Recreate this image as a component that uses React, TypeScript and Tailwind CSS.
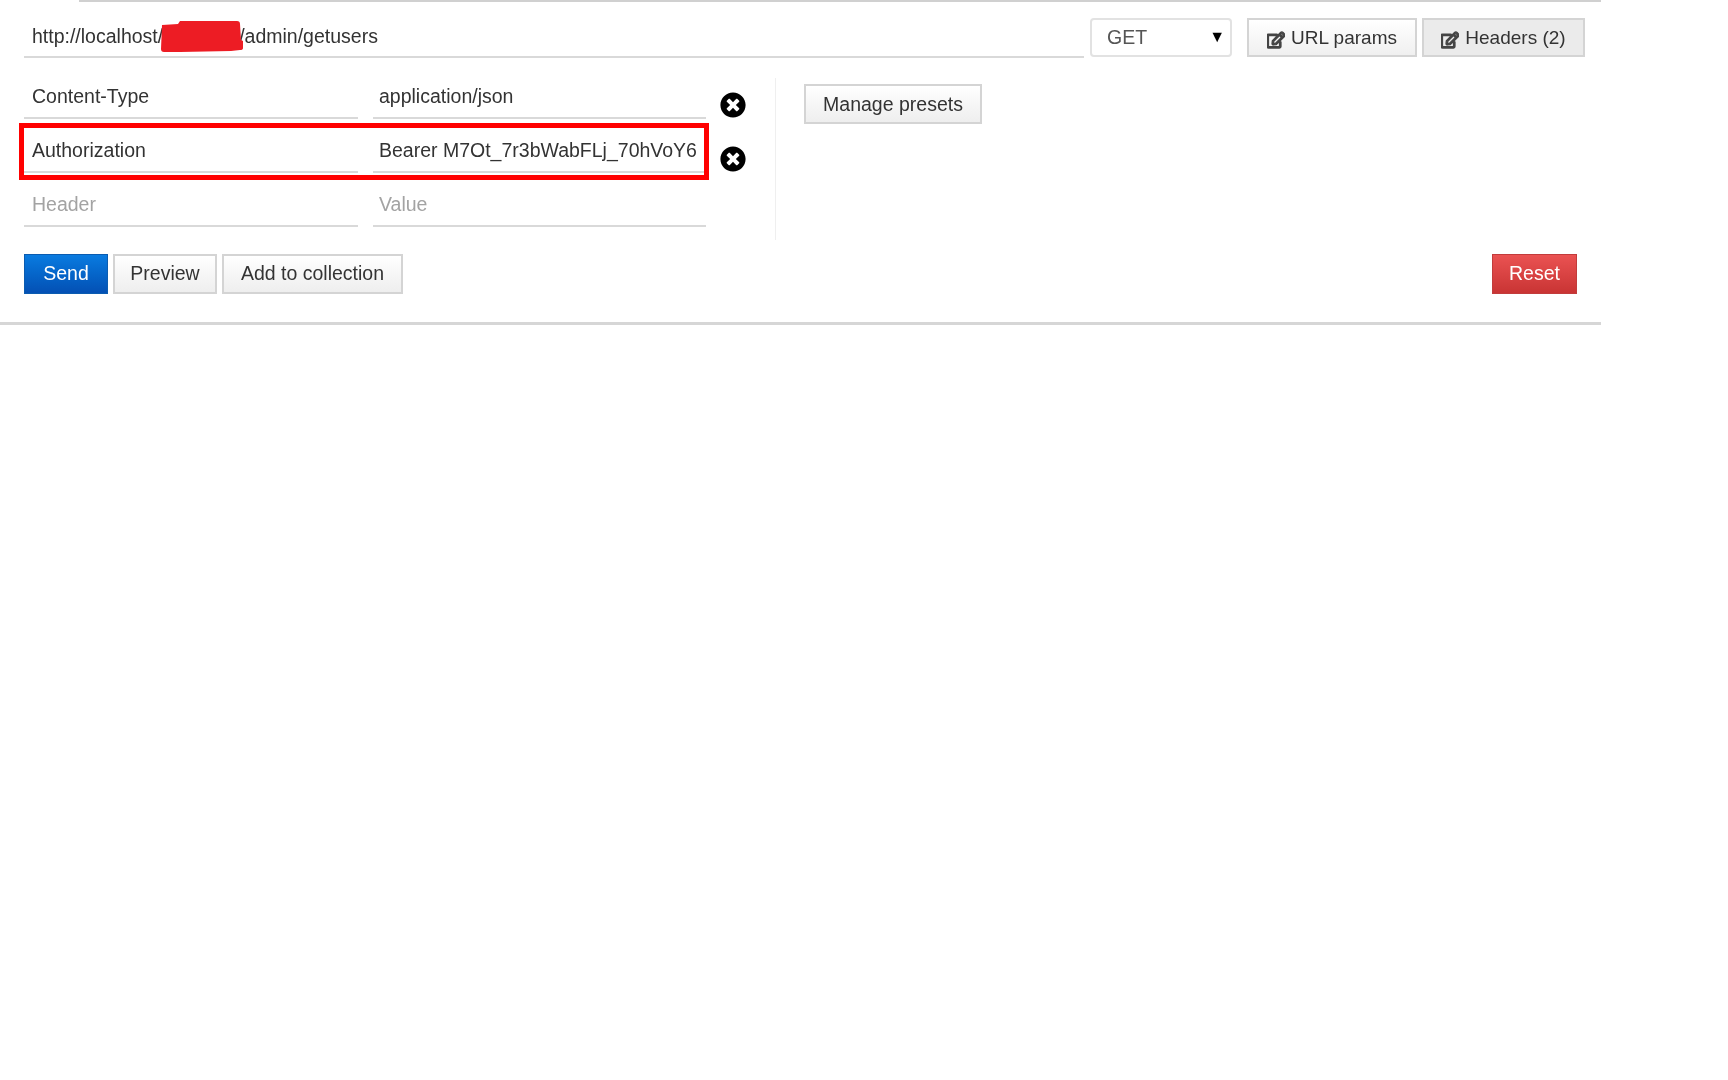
import React from 'react';
import { FaRegEdit, FaTimesCircle } from 'react-icons/fa';

function Field({ text, placeholder, className }: { text?: string; placeholder?: string; className: string }) {
  return (
    <div className={`h-[41px] border-b-2 border-[#d9d9d9] text-[19.5px] leading-[36px] whitespace-nowrap ${className} ${text ? 'text-[#333]' : 'text-[#a3a3a3]'}`}>
      {text || placeholder}
    </div>
  );
}

function HeaderRow({ name, value, marked }: { name?: string; value?: string; marked?: boolean }) {
  return (
    <div className="relative flex h-[54px] items-end">
      <Field text={name} placeholder="Header" className="w-[334px] pl-2" />
      <Field text={value} placeholder="Value" className="ml-[15px] w-[333px] pl-[6px]" />
      {name && <FaTimesCircle className="absolute left-[696px] top-[27px] text-[26px] text-black" />}
      {marked && <div className="absolute left-[-5px] top-[4px] h-[57px] w-[690px] border-[5px] border-[#f00]" />}
    </div>
  );
}

function TabButton({ label, active, className }: { label: string; active?: boolean; className: string }) {
  return (
    <button className={`flex h-[39px] items-center justify-center gap-[6px] border-2 border-[#d4d4d4] pt-[1px] text-[19px] text-[#333] ${active ? 'bg-[#ebebeb]' : 'bg-gradient-to-b from-white to-[#f0f0f0]'} ${className}`}>
      <FaRegEdit className="mt-[3px] stroke-[40] text-[18px] text-[#444]" />
      {label}
    </button>
  );
}

function PlainButton({ label, className }: { label: string; className: string }) {
  return (
    <button className={`h-[40px] border-2 border-[#d4d4d4] bg-gradient-to-b from-white to-[#eeeeee] text-[19.5px] text-[#333] ${className}`}>
      {label}
    </button>
  );
}

export default function App() {
  return (
    <div className="h-[1080px] bg-white font-['Liberation_Sans',Arial,sans-serif] blur-[0.4px]">
      <div className="w-[1601px] border-b-[3px] border-[#d6d6d6] pb-[28px]">
        <div className="ml-[79px] h-[2px] bg-[#d0d0d0]" />

        <div className="flex pl-6 pt-4">
          <div className="relative h-[40px] w-[1060px] border-b-2 border-[#d9d9d9] pl-2 text-[19.5px] leading-[36px] whitespace-nowrap text-[#333]">
            http://localhost/
            <span className="inline-block w-[76px]" />
            /admin/getusers
            {/* hand drawn redaction over the host name */}
            <svg className="absolute left-[137px] top-[3px]" width="82" height="31" viewBox="0 0 82 31">
              <path d="M1 4 L17 3 L19 0 L76 0 Q79 0 79 3 L80 19 L82 20 L82 27 Q82 29 79 29 L70 30 L19 31 L3 31 Q0 31 0 28 Z" fill="#ed1c24" />
            </svg>
          </div>
          <div className="ml-[6px] flex h-[39px] w-[142px] items-center justify-between rounded-[4px] border-2 border-[#e2e2e2] pl-[15px] pr-[5px] pt-[1px] text-[19.5px] text-[#555]">
            GET
            <span className="mb-[3px] text-[16px] text-black">▼</span>
          </div>
          <TabButton label="URL params" className="ml-[15px] w-[170px]" />
          <TabButton label="Headers (2)" active className="ml-[5px] w-[163px]" />
        </div>

        <div className="ml-6 mt-[7px] flex">
          <div className="w-[751px]">
            <HeaderRow name="Content-Type" value="application/json" />
            <HeaderRow name="Authorization" value="Bearer M7Ot_7r3bWabFLj_70hVoY6" marked />
            <HeaderRow />
          </div>
          <div className="mt-[13px] h-[162px] border-l border-[#efefef]" />
          <PlainButton label="Manage presets" className="ml-[28px] mt-[19px] h-[39px] w-[178px] pt-[1px]" />
        </div>

        <div className="mt-[14px] flex pl-6 pr-6">
          <button className="h-[40px] w-[84px] border border-[#0b5cb0] bg-gradient-to-b from-[#0a7be0] to-[#0450b4] text-[19.5px] text-white">
            Send
          </button>
          <PlainButton label="Preview" className="ml-[5px] w-[104px]" />
          <PlainButton label="Add to collection" className="ml-[5px] w-[181px]" />
          <button className="ml-auto h-[40px] w-[85px] border border-[#c23c3c] bg-gradient-to-b from-[#ea5252] to-[#c93434] text-[19.5px] text-white">
            Reset
          </button>
        </div>
      </div>
    </div>
  );
}
